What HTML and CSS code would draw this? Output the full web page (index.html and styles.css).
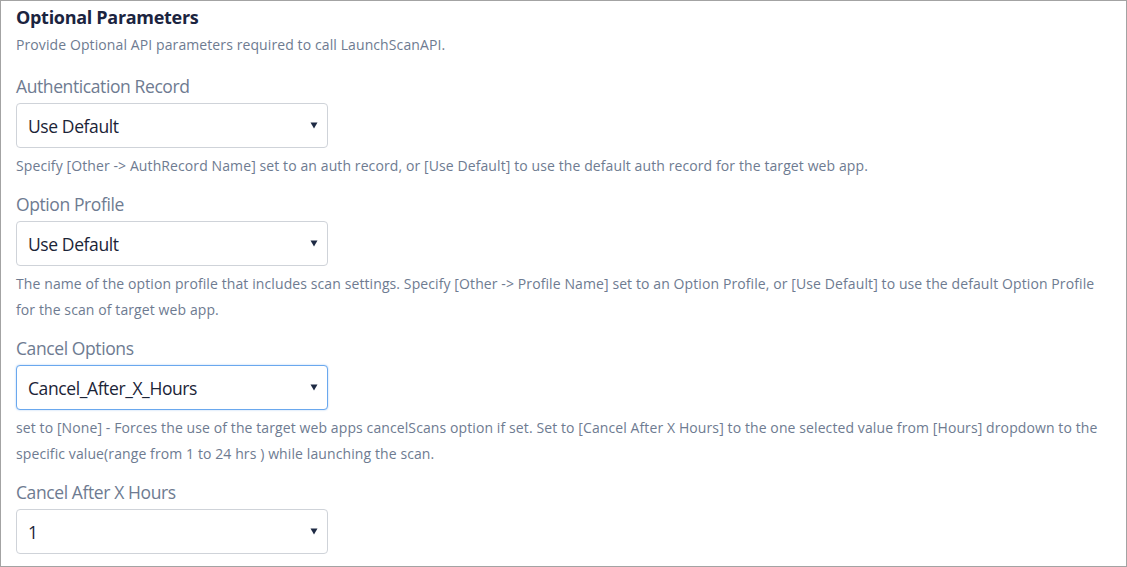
FILE: index.html
```html
<!DOCTYPE html>
<html>
<head>
<meta charset="utf-8">
<link rel="stylesheet" href="styles.css">
</head>
<body>
<div class="panel">
  <h2 class="title">Optional Parameters</h2>
  <p class="subtitle">Provide Optional API parameters required to call LaunchScanAPI.</p>

  <div class="group">
    <label class="label">Authentication Record</label>
    <div class="select-wrap">
      <select class="select"><option>Use Default</option></select>
      <svg class="caret" width="8" height="7" viewBox="0 0 8 7"><path d="M0.5 0.5h7L4 6.5z" fill="#1e2a44"/></svg>
    </div>
    <p class="help">Specify [Other -&gt; AuthRecord Name] set to an auth record, or [Use Default] to use the default auth record for the target web app.</p>
  </div>

  <div class="group">
    <label class="label">Option Profile</label>
    <div class="select-wrap">
      <select class="select"><option>Use Default</option></select>
      <svg class="caret" width="8" height="7" viewBox="0 0 8 7"><path d="M0.5 0.5h7L4 6.5z" fill="#1e2a44"/></svg>
    </div>
    <p class="help">The name of the option profile that includes scan settings. Specify [Other -&gt; Profile Name] set to an Option Profile, or [Use Default] to use the default Option Profile for the scan of target web app.</p>
  </div>

  <div class="group">
    <label class="label">Cancel Options</label>
    <div class="select-wrap">
      <select class="select focused"><option>Cancel_After_X_Hours</option></select>
      <svg class="caret" width="8" height="7" viewBox="0 0 8 7"><path d="M0.5 0.5h7L4 6.5z" fill="#1e2a44"/></svg>
    </div>
    <p class="help">set to [None] - Forces the use of the target web apps cancelScans option if set. Set to [Cancel After X Hours] to the one selected value from [Hours] dropdown to the specific value(range from 1 to 24 hrs ) while launching the scan.</p>
  </div>

  <div class="group">
    <label class="label">Cancel After X Hours</label>
    <div class="select-wrap">
      <select class="select"><option>1</option></select>
      <svg class="caret" width="8" height="7" viewBox="0 0 8 7"><path d="M0.5 0.5h7L4 6.5z" fill="#1e2a44"/></svg>
    </div>
  </div>
</div>
</body>
</html>
```
FILE: styles.css
```css
html, body {
  margin: 0;
  padding: 0;
  background: #ffffff;
}

.panel {
  box-sizing: border-box;
  width: 1127px;
  height: 567px;
  border: 1px solid #a3a3a3;
  padding: 4px 15px 0 15px;
  overflow: hidden;
  font-family: "Open Sans", "Noto Sans", sans-serif;
}

.title {
  margin: 0;
  font-size: 18px;
  line-height: 24px;
  font-weight: 700;
  color: #1b2440;
  letter-spacing: -0.3px;
}

.subtitle {
  margin: 6px 0 0 0;
  font-size: 14px;
  line-height: 20px;
  color: #6e7b91;
  letter-spacing: 0.1px;
}

.group {
  display: flex;
  flex-direction: column;
  align-items: flex-start;
}

.subtitle + .group {
  margin-top: 19px;
}

.label {
  display: block;
  font-size: 17.5px;
  line-height: 24px;
  color: #6e7b91;
  letter-spacing: -0.4px;
}

.select-wrap {
  position: relative;
  margin-top: 5px;
  width: 312px;
  height: 45px;
}

.select {
  appearance: none;
  -webkit-appearance: none;
  box-sizing: border-box;
  width: 312px;
  height: 45px;
  margin: 0;
  padding: 0 30px 0 11px;
  border: 1px solid #cfd3d9;
  border-radius: 4px;
  background: #ffffff;
  font-family: "Open Sans", "Noto Sans", sans-serif;
  font-size: 17.5px;
  color: #1b2437;
  letter-spacing: -0.4px;
  outline: none;
}

.select.focused {
  border-color: #6aa8ee;
  box-shadow: 0 0 2px rgba(106, 168, 238, 0.6);
}

.caret {
  position: absolute;
  right: 10px;
  top: 19px;
}

.help {
  margin: 5px 0 13px 0;
  font-size: 14px;
  line-height: 26px;
  color: #6e7b91;
  letter-spacing: 0.1px;
}
```
